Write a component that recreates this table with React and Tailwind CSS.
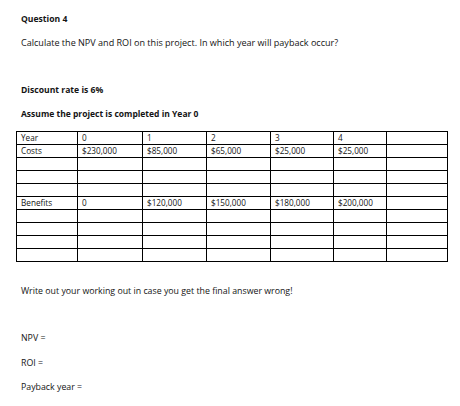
import React from 'react'

const COLS = [61, 65, 64, 64, 63, 53, 61]

const ROWS = [
  ['Year', '0', '1', '2', '3', '4', ''],
  ['Costs', '$230,000', '$85,000', '$65,000', '$25,000', '$25,000', ''],
  ['', '', '', '', '', '', ''],
  ['', '', '', '', '', '', ''],
  ['', '', '', '', '', '', ''],
  ['Benefits', '0', '$120,000', '$150,000', '$180,000', '$200,000', ''],
  ['', '', '', '', '', '', ''],
  ['', '', '', '', '', '', ''],
  ['', '', '', '', '', '', ''],
  ['', '', '', '', '', '', ''],
]

export default function App() {
  return (
    <div
      className="w-[460px] h-[406px] bg-white text-[#141414] overflow-hidden pt-[13px]"
      style={{ fontFamily: '"Open Sans", "Liberation Sans", sans-serif' }}
    >
      <div className="pl-[21px]">
        <p className="text-[8.6px] leading-[12px] font-bold">Question 4</p>
        <p className="mt-[12px] text-[9.05px] leading-[12px]">
          Calculate the NPV and ROI on this project. In which year will payback occur?
        </p>
        <p className="mt-[35px] text-[8.6px] leading-[12px] font-bold">Discount rate is 6%</p>
        <p className="mt-[12px] text-[8.5px] leading-[12px] font-bold">
          Assume the project is completed in Year 0
        </p>
      </div>

      {/* cost / benefit table */}
      <table className="ml-[16px] mt-[11px] border-collapse table-fixed">
        <colgroup>
          {COLS.map((w, i) => (
            <col key={i} style={{ width: w }} />
          ))}
        </colgroup>
        <tbody>
          {ROWS.map((row, r) => (
            <tr key={r} className="h-[13px]">
              {row.map((cell, c) => (
                <td
                  key={c}
                  className="border border-black px-[4px] py-0 text-[8.2px] leading-[12px] align-middle whitespace-nowrap"
                >
                  {cell}
                </td>
              ))}
            </tr>
          ))}
        </tbody>
      </table>

      <div className="pl-[21px]">
        <p className="mt-[23px] text-[8.8px] leading-[12px]">
          Write out your working out in case you get the final answer wrong!
        </p>
        <p className="mt-[35px] text-[8.8px] leading-[12px]">NPV =</p>
        <p className="mt-[13px] text-[8.8px] leading-[12px]">ROI =</p>
        <p className="mt-[12px] text-[8.8px] leading-[12px]">Payback year =</p>
      </div>
    </div>
  )
}
